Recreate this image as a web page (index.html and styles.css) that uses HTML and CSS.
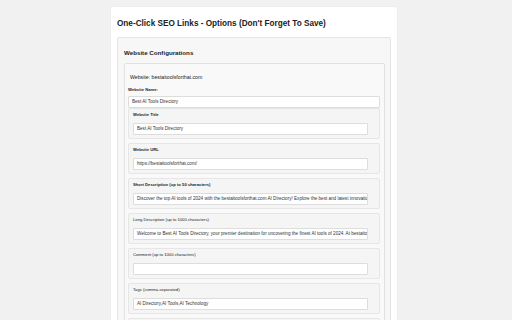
FILE: index.html
```html
<!DOCTYPE html>
<html>
<head>
<meta charset="utf-8">
<link rel="stylesheet" href="styles.css">
</head>
<body>
<div class="page">
  <h1 class="title">One-Click SEO Links - Options (Don't Forget To Save)</h1>
  <div class="section">
    <h2 class="section-title">Website Configurations</h2>
    <div class="site">
      <div class="site-name">Website: bestaitoolsforthat.com</div>
      <div class="label name-label bold">Website Name:</div>
      <div class="input wide">Best AI Tools Directory</div>
      <div class="group">
        <div class="label bold">Website Title</div>
        <div class="input">Best AI Tools Directory</div>
      </div>
      <div class="group">
        <div class="label bold">Website URL</div>
        <div class="input">https://bestaitoolsforthat.com/</div>
      </div>
      <div class="group">
        <div class="label bold">Short Description (up to 50 characters)</div>
        <div class="input">Discover the top AI tools of 2024 with the bestaitoolsforthat.com AI Directory! Explore the best and latest innovations</div>
      </div>
      <div class="group">
        <div class="label">Long Description (up to 1000 characters)</div>
        <div class="input">Welcome to Best AI Tools Directory, your premier destination for uncovering the finest AI tools of 2024. At bestaitoolsforthat.com</div>
      </div>
      <div class="group">
        <div class="label">Comment (up to 1000 characters)</div>
        <div class="input"></div>
      </div>
      <div class="group">
        <div class="label">Tags (comma-separated)</div>
        <div class="input">AI Directory,AI Tools,AI Technology</div>
      </div>
      <div class="group">
        <div class="label">Category</div>
        <div class="input"></div>
      </div>
    </div>
  </div>
</div>
</body>
</html>
```
FILE: styles.css
```css
html, body {
  margin: 0;
  padding: 0;
  background: #f1f1f1;
  font-family: "Liberation Sans", Arial, sans-serif;
  color: #222;
  overflow: hidden;
  height: 320px;
}
.page {
  width: 274px;
  margin: 7px 0 0 111px;
  background: #fff;
  border-radius: 3px;
  padding: 12px 6px 0 6px;
  height: 400px;
  box-shadow: 0 0 2px rgba(0,0,0,0.05);
}
.title {
  margin: 0 0 8px 0;
  font-size: 8.2px;
  font-weight: bold;
  line-height: 10px;
  color: #222;
}
.section {
  background: #f7f7f7;
  border: 1px solid #e4e4e4;
  border-radius: 2px;
  padding: 11px 5px 0 6px;
  height: 400px;
}
.section-title {
  margin: 0 0 6px 0;
  font-size: 6.2px;
  font-weight: bold;
  line-height: 8px;
  color: #222;
}
.site {
  background: #f9f9f9;
  border: 1px solid #e2e2e2;
  border-radius: 2px;
  padding: 10px 4px 0 3px;
  height: 400px;
}
.site-name {
  font-size: 5.2px;
  line-height: 7px;
  padding-left: 2px;
  color: #222;
}
.label {
  font-size: 4.2px;
  line-height: 6px;
  color: #1e1e1e;
}
.name-label {
  margin-top: 6px;
  margin-bottom: 3px;
}
.bold { font-weight: bold; }
.input {
  background: #fff;
  border: 1px solid #ddd;
  border-radius: 1px;
  height: 10px;
  font-size: 4.6px;
  line-height: 10px;
  padding: 0 3px;
  white-space: nowrap;
  overflow: hidden;
  color: #333;
  box-sizing: content-box;
}
.group {
  background: #f5f5f5;
  border: 1px solid #e6e6e6;
  border-radius: 2px;
  margin: 0 0 4px 0;
  padding: 3px 11px 3px 4px;
}
.group .input {
  margin-top: 5px;
}
```
